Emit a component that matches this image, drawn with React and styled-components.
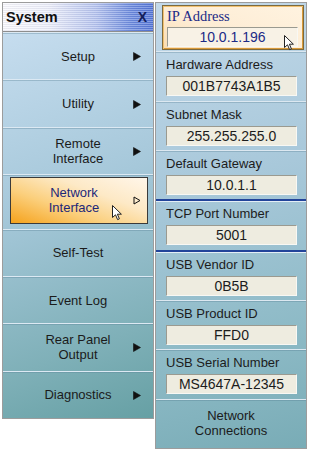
import React from "react";
import styled, { createGlobalStyle, css } from "styled-components";

const GlobalStyle = createGlobalStyle`
  html, body {
    margin: 0;
    padding: 0;
    background: #fff;
  }
  body {
    font-family: "Liberation Sans", Arial, sans-serif;
  }
`;

const menuItems = [
  { label: ["Setup"], arrow: true },
  { label: ["Utility"], arrow: true },
  { label: ["Remote", "Interface"], arrow: true },
  { label: ["Network", "Interface"], arrow: true, selected: true },
  { label: ["Self-Test"] },
  { label: ["Event Log"] },
  { label: ["Rear Panel", "Output"], arrow: true },
  { label: ["Diagnostics"], arrow: true },
];

const fields = [
  { label: "IP Address", value: "10.0.1.196", active: true },
  { label: "Hardware Address", value: "001B7743A1B5" },
  { label: "Subnet Mask", value: "255.255.255.0" },
  { label: "Default Gateway", value: "10.0.1.1", thick: true },
  { label: "TCP Port Number", value: "5001", thick: true },
  { label: "USB Vendor ID", value: "0B5B" },
  { label: "USB Product ID", value: "FFD0" },
  { label: "USB Serial Number", value: "MS4647A-12345" },
];

const Cursor = ({ className }) => (
  <svg className={className} width="11" height="16" viewBox="0 0 11 16">
    <path
      d="M0.5 0.5 L0.5 12.5 L3.5 9.8 L5.6 14.6 L7.4 13.8 L5.4 9.2 L9.4 9.2 Z"
      fill="#fff"
      stroke="#222"
      strokeWidth="1"
      strokeLinejoin="round"
    />
  </svg>
);

const Arrow = ({ hollow }) => (
  <svg width="8" height="9" viewBox="0 0 8 9">
    <path
      d={hollow ? "M1 1 L7 4.5 L1 8 Z" : "M0.5 0.5 L7.5 4.5 L0.5 8.5 Z"}
      fill={hollow ? "none" : "#111"}
      stroke="#111"
      strokeWidth={hollow ? 1 : 0.6}
    />
  </svg>
);

const App = () => {
  return (
    <>
      <GlobalStyle />
      <Wrap>
        <Menu>
          <TitleBar>
            <Title>System</Title>
            <Close>X</Close>
          </TitleBar>
          {menuItems.map((item) => (
            <Item key={item.label.join(" ")} selected={item.selected}>
              <Face selected={item.selected}>
                <span />
                <ItemText selected={item.selected}>
                  {item.label.map((l) => (
                    <div key={l}>{l}</div>
                  ))}
                  {item.selected && <MenuCursor />}
                </ItemText>
                <ArrowCell selected={item.selected}>
                  {item.arrow && <Arrow hollow={item.selected} />}
                </ArrowCell>
              </Face>
            </Item>
          ))}
        </Menu>
        <Panel>
          {fields.map((f) => (
            <Section key={f.label} thick={f.thick}>
              <FieldBox active={f.active}>
                <Label active={f.active}>{f.label}</Label>
                <Field active={f.active}>
                  {f.value}
                  {f.active && <FieldCursor />}
                </Field>
              </FieldBox>
            </Section>
          ))}
          <Section last>
            <Action>
              <div>Network</div>
              <div>Connections</div>
            </Action>
          </Section>
        </Panel>
      </Wrap>
    </>
  );
};

export default App;

const Wrap = styled.div`
  display: flex;
  align-items: flex-start;
  gap: 1px;
  padding: 2px 0 0 2px;
`;

const Menu = styled.div`
  width: 150px;
  height: 415px;
  display: flex;
  flex-direction: column;
  border: 1px solid #9c9c9c;
  background: linear-gradient(160deg, #cbe0f2 0%, #a6c8da 45%, #7fb0b8 80%, #66a0a4 100%);
`;

const TitleBar = styled.div`
  height: 28px;
  flex: none;
  display: flex;
  align-items: center;
  justify-content: space-between;
  padding: 0 6px 0 3px;
  border-bottom: 1px solid #8e8e8e;
  box-shadow: 0 1px 0 #e6eef6;
  background:
    repeating-linear-gradient(180deg, rgba(255, 255, 255, 0.28) 0 1px, rgba(0, 0, 40, 0.06) 1px 2px),
    linear-gradient(90deg, #fbfbff 0%, #eef0fb 30%, #b6c4f0 62%, #6d8ce0 85%, #5576d8 100%);
`;

const Title = styled.span`
  font-weight: bold;
  font-size: 14.5px;
  color: #111;
`;

const Close = styled.span`
  font-size: 14px;
  font-weight: bold;
  color: #14205a;
`;

const Item = styled.div`
  flex: 1 1 0;
  min-height: 0;
  display: flex;
  border-top: 1px solid #dce9f3;
  box-shadow: inset 0 1px 0 rgba(90, 130, 150, 0.35);
  padding: ${({ selected }) => (selected ? "2px 5px 5px 7px" : "0")};
  &:first-of-type {
    border-top: none;
    box-shadow: none;
  }
`;

const Face = styled.div`
  flex: 1;
  display: grid;
  grid-template-columns: 22px 1fr 22px;
  align-items: center;
  ${({ selected }) =>
    selected &&
    css`
      grid-template-columns: 14px 1fr 24px;
      border: 1px solid #3a3a3a;
      background: linear-gradient(20deg, #f5a21c 0%, #fbcf7c 35%, #fde9c6 65%, #fff6ea 100%);
    `}
`;

const ItemText = styled.div`
  position: relative;
  text-align: center;
  font-size: 13px;
  line-height: 15px;
  color: ${({ selected }) => (selected ? "#1d2878" : "#1b1b1b")};
`;

const ArrowCell = styled.div`
  display: flex;
  justify-content: flex-start;
  padding-left: ${({ selected }) => (selected ? "10px" : "2px")};
  padding-top: 1px;
`;

const MenuCursor = styled(Cursor)`
  position: absolute;
  left: 87px;
  top: 20px;
`;

const Panel = styled.div`
  width: 150px;
  height: 445px;
  display: flex;
  flex-direction: column;
  border: 1px solid #9c9c9c;
  background: linear-gradient(165deg, #c3d9ea 0%, #a8c8da 40%, #8dbac6 75%, #79acb6 100%);
`;

const Section = styled.div`
  flex: 1 1 0;
  min-height: 0;
  display: flex;
  flex-direction: column;
  border-bottom: ${({ thick, last }) =>
    last ? "none" : thick ? "2px solid #22449a" : "1px solid #dce8f1"};
  box-shadow: ${({ thick, last }) =>
    last ? "none" : thick ? "0 1px 0 #e4eef6" : "0 1px 0 rgba(80, 120, 140, 0.3)"};
`;

const FieldBox = styled.div`
  flex: 1;
  display: flex;
  flex-direction: column;
  padding: 5px 9px 4px 10px;
  ${({ active }) =>
    active &&
    css`
      margin: 2px 2px 1px 6px;
      padding: 2px 5px 2px 4px;
      border: 1px solid #7d6a3e;
      box-shadow: inset 1px 1px 0 #f0c070, inset -1px -1px 0 #d89a3a;
      background: linear-gradient(200deg, #fff3e0 0%, #fdecd4 60%, #f9dcb0 100%);
    `}
`;

const Label = styled.div`
  font-size: ${({ active }) => (active ? "14.5px" : "13px")};
  font-family: ${({ active }) =>
    active ? '"Liberation Serif", "Times New Roman", serif' : '"Liberation Sans", Arial, sans-serif'};
  color: ${({ active }) => (active ? "#1b2a86" : "#1c1c1c")};
  line-height: 16px;
  margin-bottom: 3px;
  white-space: nowrap;
`;

const Field = styled.div`
  position: relative;
  height: 18px;
  display: flex;
  align-items: center;
  justify-content: center;
  font-size: 14px;
  color: ${({ active }) => (active ? "#1b2a86" : "#1c1c1c")};
  border-top: 1px solid #9a9a90;
  border-left: 1px solid #9a9a90;
  border-bottom: 1px solid #f8f8f4;
  border-right: 1px solid #f8f8f4;
  background: ${({ active }) => (active ? "#f8f2e6" : "#eeece0")};
`;

const FieldCursor = styled(Cursor)`
  position: absolute;
  right: 2px;
  top: 7px;
`;

const Action = styled.div`
  flex: 1;
  display: flex;
  flex-direction: column;
  align-items: center;
  justify-content: center;
  font-size: 13px;
  line-height: 15px;
  color: #1b1b1b;
  padding-bottom: 1px;
`;
